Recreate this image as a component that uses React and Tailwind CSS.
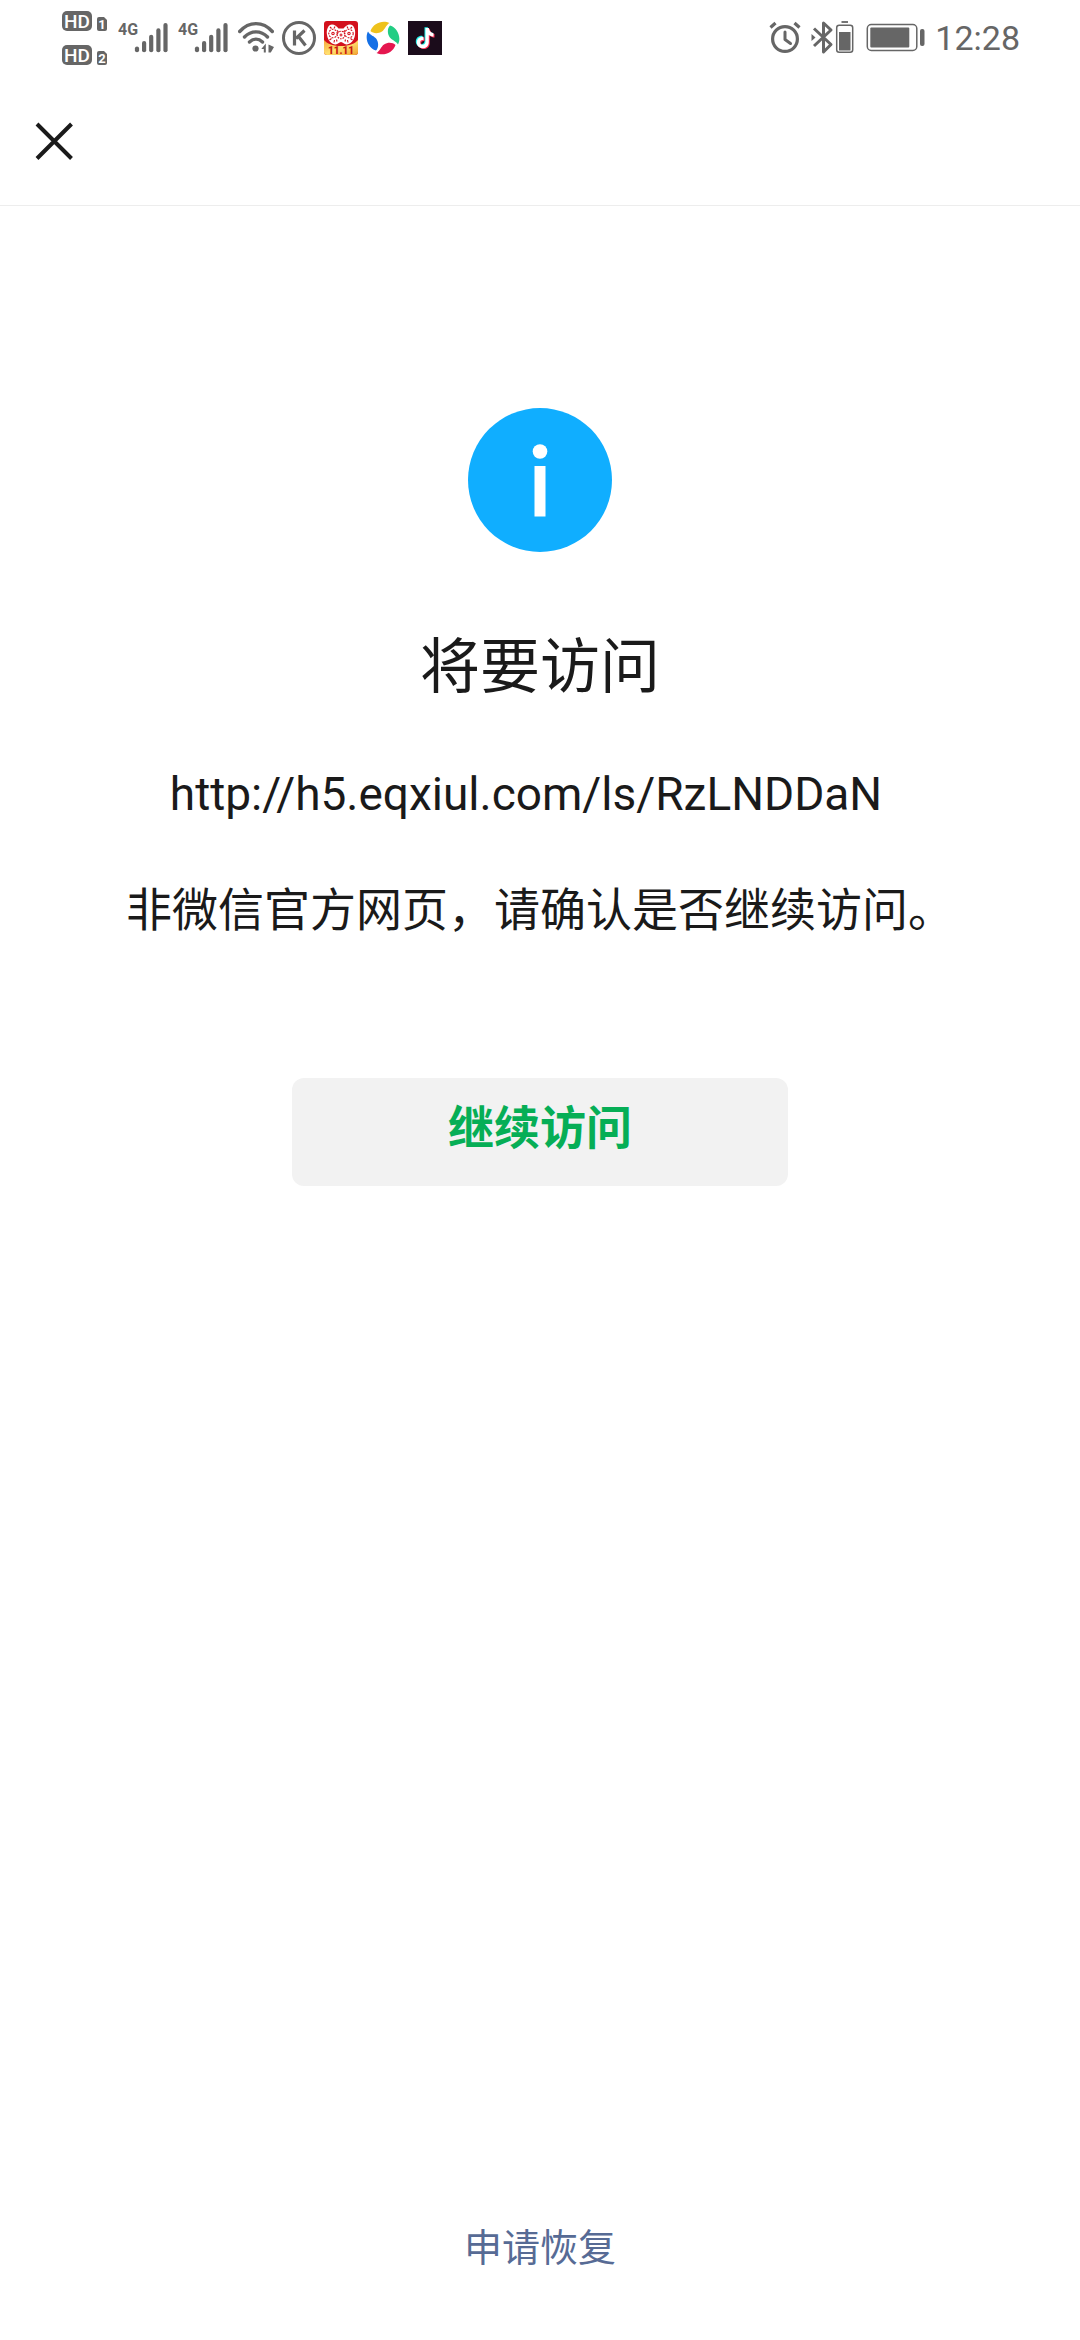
const GRAY = "#666666";

function HdIcon() {
  const rows = [
    { y: 1, label: "1" },
    { y: 35, label: "2" },
  ];
  return (
    <svg width="48" height="56" viewBox="0 0 48 56" fontFamily="Roboto, sans-serif">
      {rows.map((row) => (
        <g key={row.label}>
          <rect x="0" y={row.y} width="30" height="20" rx="5" fill={GRAY} />
          <text x="15" y={row.y + 17} fontSize="19" fontWeight="500" textAnchor="middle" fill="#fff">
            HD
          </text>
          <path
            d={`M37 ${row.y + 6}h5l3 3v9a2 2 0 0 1-2 2h-6a2 2 0 0 1-2-2v-10a2 2 0 0 1 2-2z`}
            fill={GRAY}
          />
          <text x="40" y={row.y + 18} fontSize="13" fontWeight="700" textAnchor="middle" fill="#fff">
            {row.label}
          </text>
        </g>
      ))}
    </svg>
  );
}

function SignalIcon() {
  return (
    <svg width="52" height="40" viewBox="0 -3 52 40">
      <text x="0" y="14" fontSize="16" fontWeight="700" fontFamily="Roboto, sans-serif" fill={GRAY}>
        4G
      </text>
      <g stroke={GRAY} strokeWidth="4.2" strokeLinecap="round">
        <path d="M19 27.6v1.6" />
        <path d="M26.1 22v7.2" />
        <path d="M33.2 15.8v13.4" />
        <path d="M40.4 9.4v19.8" />
        <path d="M47.5 4.1v25.1" />
      </g>
    </svg>
  );
}

function WifiIcon() {
  return (
    <svg width="36" height="34" viewBox="0 0 36 34" fill="none" stroke={GRAY} strokeWidth="3.4" strokeLinecap="round">
      <path d="M1.700 10.500C11 0 25 0 34.300 10.500" />
      <path d="M6.500 16C13 9.200 23 9.200 29.500 16" />
      <path d="M11.500 21C15.500 17.300 20.500 17.300 24.500 21" />
      <circle cx="17.5" cy="27.5" r="3.1" fill={GRAY} stroke="none" />
      <path d="M27.8 22.5v9h-2V28h-2.500zM30.500 23.500l5.500 2.500-3.200 5.500h-2.300z" fill={GRAY} stroke="none" />
    </svg>
  );
}

function KIcon() {
  return (
    <svg width="34" height="34" viewBox="0 0 34 34" fill="none" stroke={GRAY}>
      <circle cx="17" cy="17" r="15.5" strokeWidth="3" />
      <path d="M12.5 9.500v15M22.500 9.500l-8.500 8M16.500 15.500l7 9" strokeWidth="3.2" />
    </svg>
  );
}

function SaleIcon() {
  return (
    <svg width="34" height="34" viewBox="0 0 34 34">
      <defs>
        <linearGradient id="gold" x1="0" y1="0" x2="1" y2="1">
          <stop offset="0" stopColor="#f5a83c" />
          <stop offset=".5" stopColor="#ffe070" />
          <stop offset="1" stopColor="#f0a330" />
        </linearGradient>
      </defs>
      <rect width="34" height="34" rx="3" fill="#d3101c" />
      <path d="M0 19C3 22.500 8 25 17 25S31 22.500 34 19v12a3 3 0 0 1-3 3H3a3 3 0 0 1-3-3z" fill="url(#gold)" />
      <path
        d="M8 3.500c2.500 0 5 2 6.500 4h5c1.500-2 4-4 6.500-4 3.500 0 6 5 5 10.500-1 6-5 9.500-8.500 9.500-2.500 0-3.500-2.500-5.500-2.500s-3 2.500-5.500 2.500C8 23.500 4 20 3 14 2 8.500 4.500 3.500 8 3.500z"
        fill="#fff"
      />
      <g fill="none" stroke="#d3101c" strokeWidth="1.1">
        <circle cx="9" cy="12.500" r="4.200" strokeDasharray="1.800 1.200" />
        <circle cx="25" cy="12.500" r="4.200" strokeDasharray="1.800 1.200" />
        <circle cx="9" cy="12.500" r="1.200" />
        <circle cx="25" cy="12.500" r="1.200" />
        <circle cx="17" cy="14" r="3.800" strokeDasharray="1.600 1" />
        <path d="M17 12.500v3M15.500 14h3M13 9.500l1.500 1.500M21 9.500L19.500 11" />
        <path d="M6 6l1.500 1.500M11 5.500l-1 2M28 6l-1.500 1.500M23 5.500l1 2M5.500 19l2-1.500M10 21.500l.5-2.500M28.500 19l-2-1.500M24 21.500l-.5-2.500M13 20.500l-.5-2M21 20.500l.5-2" />
      </g>
      <text x="17" y="33" fontSize="10" fontWeight="900" fontFamily="Roboto, sans-serif" textAnchor="middle" fill="#c81a10">
        11.11
      </text>
    </svg>
  );
}

function PinwheelIcon() {
  return (
    <svg width="34" height="34" viewBox="0 0 34 34">
      <path d="M4.500 10C7 2 17-1.500 23.500 2C20 4 19 8.500 16 10.500C12 13 7 12.500 4.500 10z" fill="#eec21c" />
      <path d="M24 4.500C32 7 35.500 17 32 23.500C30 20 25.500 19 23.500 16C21 12 21.500 7 24 4.500z" fill="#22cd83" />
      <path d="M29.500 24C27 32 17 35.500 10.500 32C14 30 15 25.500 18 23.500C22 21 27 21.500 29.500 24z" fill="#e5174f" />
      <path d="M10 29.500C2 27-1.500 17 2 10.500C4 14.500 8.500 15 10.500 18C13 22 12.500 27 10 29.500z" fill="#1470e6" />
    </svg>
  );
}

function TiktokIcon() {
  const note =
    "M17.5 7h3.300c.4 3 2 4.800 4.700 5.200v3.400c-1.800 0-3.400-.6-4.700-1.500v6.800c0 4-2.700 6.300-6 6.300s-6-2.500-6-5.800c0-3.600 3-6.100 6.700-5.700v3.500c-1.700-.4-3.300.5-3.300 2.200 0 1.400 1.100 2.400 2.500 2.400 1.600 0 2.800-1 2.800-3z";
  return (
    <svg width="34" height="34" viewBox="0 0 34 34">
      <rect width="34" height="34" fill="#1b0c1b" />
      <path d={note} fill="#25f4ee" transform="translate(-1 -.8)" />
      <path d={note} fill="#fe2c55" transform="translate(1 .8)" />
      <path d={note} fill="#fff" />
    </svg>
  );
}

function AlarmIcon() {
  return (
    <svg width="32" height="34" viewBox="0 0 32 34" fill="none" stroke={GRAY}>
      <circle cx="16" cy="18" r="12.4" strokeWidth="3.2" />
      <path d="M16 11v7.500l5.500 4" strokeWidth="3" strokeLinecap="round" strokeLinejoin="round" />
      <path d="M1.500 6.500l5-4.500M30.500 6.500l-5-4.500" strokeWidth="3.2" />
    </svg>
  );
}

function BluetoothIcon() {
  return (
    <svg width="44" height="34" viewBox="0 0 44 34" fill="none" stroke={GRAY}>
      <path d="M3 7.500l17 16-7.500 7.500V2L20 9 3 25" strokeWidth="3" strokeLinejoin="round" />
      <path d="M.5 13l4 3.500-4 3.500z" fill={GRAY} stroke="none" />
      <rect x="25.7" y="4.2" width="16" height="27" rx="2.5" strokeWidth="1.5" />
      <rect x="28" y="11" width="11.5" height="18.5" fill={GRAY} stroke="none" />
      <path d="M30.500 1H37" strokeWidth="1.8" />
    </svg>
  );
}

function BatteryIcon() {
  return (
    <svg width="60" height="34" viewBox="0 0 60 34">
      <rect x="2.3" y="3.5" width="49.5" height="26" rx="4" fill="none" stroke={GRAY} strokeWidth="1.5" />
      <rect x="5.3" y="6.5" width="39" height="20" rx="1" fill={GRAY} />
      <rect x="55" y="8" width="4.5" height="17" rx="2" fill={GRAY} />
    </svg>
  );
}

function StatusBar() {
  return (
    <div className="flex h-[76px] items-center justify-between pr-[60px] pl-[62px]">
      <div className="flex items-center gap-2">
        <HdIcon />
        <SignalIcon />
        <SignalIcon />
        <WifiIcon />
        <KIcon />
        <SaleIcon />
        <PinwheelIcon />
        <TiktokIcon />
      </div>
      <div className="flex items-center gap-2.5">
        <AlarmIcon />
        <BluetoothIcon />
        <BatteryIcon />
        <span className="text-[34px] leading-10 text-[#666666]">12:28</span>
      </div>
    </div>
  );
}

function InfoIcon() {
  return (
    <svg width="144" height="144" viewBox="0 0 144 144">
      <circle cx="72" cy="72" r="72" fill="#10aeff" />
      <circle cx="72" cy="43.5" r="7.3" fill="#fff" />
      <rect x="66.5" y="58" width="11" height="50.5" fill="#fff" />
    </svg>
  );
}

function App() {
  return (
    <div className="flex min-h-screen flex-col bg-white font-[Roboto,'Noto_Sans_CJK_SC',sans-serif] text-[#1a1a1a]">
      <StatusBar />

      <header className="flex h-[130px] items-center border-b border-[#ededed] px-8">
        <button type="button" aria-label="关闭">
          <svg width="44" height="44" viewBox="0 0 44 44" fill="none" stroke="#1a1a1a" strokeWidth="4">
            <path d="M5 5l34.500 34.500M39.500 5L5 39.500" />
          </svg>
        </button>
      </header>

      <main className="flex flex-1 flex-col items-center pt-[202px]">
        <InfoIcon />
        <h1 className="mt-[74px] text-[60px] leading-[84px]">将要访问</h1>
        <p className="mt-[52px] pr-7 text-[46px] leading-[64px]">http://h5.eqxiul.com/ls/RzLNDDaN</p>
        <p className="mt-[52px] text-[46px] leading-[64px]">非微信官方网页，请确认是否继续访问。</p>
        <button
          type="button"
          className="mt-[136px] h-[108px] w-[496px] rounded-xl bg-[#f2f2f2] pb-2 text-[46px] leading-[64px] font-bold text-[#06ae56]"
        >
          继续访问
        </button>
      </main>

      <footer className="flex justify-center pb-16">
        <a href="#restore" className="text-[38px] leading-[56px] text-[#576b95]">
          申请恢复
        </a>
      </footer>
    </div>
  );
}

export default App;
